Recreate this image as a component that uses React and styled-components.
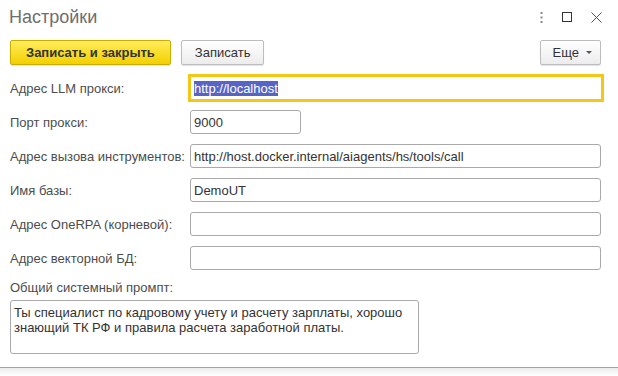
import React from "react";
import styled, { createGlobalStyle } from "styled-components";

const Global = createGlobalStyle`
  html, body { margin: 0; padding: 0; background: #fff; overflow: hidden; }
  body { font-family: "Liberation Sans", Arial, sans-serif; font-size: 13px; color: #4d4d4d; }
`;

const Window = styled.div`
  width: 618px;
  height: 376px;
  display: flex;
  flex-direction: column;
  overflow: hidden;
  background: #fff;
  & > * { flex-shrink: 0; }
`;

const Header = styled.div`
  height: 34px;
  display: flex;
  align-items: center;
  padding: 0 16px 0 9px;
  box-sizing: border-box;
`;

const Title = styled.div`
  flex: 1;
  font-size: 18px;
  color: #6e6e6e;
  padding-top: 1px;
`;

const HeaderIcons = styled.div`
  display: flex;
  align-items: center;
  gap: 19px;
`;

const IconBox = styled.div`
  width: ${(p) => p.$w}px;
  height: 12px;
  display: flex;
  align-items: center;
  justify-content: center;
`;

const Toolbar = styled.div`
  display: flex;
  align-items: center;
  gap: 10px;
  padding: 6px 17px 0 10px;
  height: 24px;
`;

const Button = styled.button`
  height: 25px;
  box-sizing: border-box;
  padding: ${(p) => p.$pad || "0 13px"};
  border-radius: 2px;
  font-family: "Liberation Sans", Arial, sans-serif;
  font-size: 13px;
  color: #333;
  cursor: pointer;
  display: flex;
  align-items: center;
  gap: 7px;
  border: 1px solid ${(p) => (p.$primary ? "#c9ad00" : "#bdbdbd")};
  background: ${(p) =>
    p.$primary
      ? "linear-gradient(#ffec5a, #f3d000)"
      : "linear-gradient(#ffffff, #ececec)"};
  box-shadow: 0 1px 1px rgba(0, 0, 0, 0.12);
  font-weight: ${(p) => (p.$primary ? 700 : 400)};
`;

const Spacer = styled.div`
  flex: 1;
`;

const Form = styled.div`
  display: grid;
  grid-template-columns: 180px 411px;
  row-gap: 10px;
  padding: 12px 0 0 10px;
  align-items: center;
`;

const Label = styled.div`
  color: #4d4d4d;
  font-size: 13px;
  white-space: nowrap;
`;

const Field = styled.div`
  width: ${(p) => p.$width || 411}px;
  height: 24px;
  box-sizing: border-box;
  border: 1px solid #a9a9a9;
  border-radius: 3px;
  padding: 0 3px;
  display: flex;
  align-items: center;
  font-size: 13px;
  color: #333;
  white-space: nowrap;
  overflow: hidden;
  ${(p) =>
    p.$focused &&
    `
    border: 1px solid #f5c518;
    border-radius: 0;
    box-shadow: 0 0 0 2px #f5c518;
    width: ${p.$width ? p.$width : 412}px;
  `}
`;

const Selected = styled.span`
  background: #5664c6;
  color: #fff;
  line-height: 15px;
`;

const PromptBlock = styled.div`
  padding: 10px 0 0 10px;
  display: flex;
  flex-direction: column;
  gap: 5px;
`;

const TextArea = styled.div`
  width: 409px;
  height: 54px;
  box-sizing: border-box;
  border: 1px solid #a9a9a9;
  border-radius: 3px;
  padding: 4px 3px;
  font-size: 13px;
  line-height: 15px;
  color: #333;
`;

const Footer = styled.div`
  margin-top: 13px;
  border-top: 1px solid #a3a3a3;
  height: 8px;
  background: linear-gradient(rgba(0, 0, 0, 0.08), rgba(0, 0, 0, 0));
`;

const Caret = styled.span`
  width: 0;
  height: 0;
  border-left: 3px solid transparent;
  border-right: 3px solid transparent;
  border-top: 3px solid #555;
  margin-top: 1px;
`;

export default function App() {
  const rows = [
    { label: "Адрес LLM прокси:", value: "http://localhost", focused: true },
    { label: "Порт прокси:", value: "9000", width: 111 },
    {
      label: "Адрес вызова инструментов:",
      value: "http://host.docker.internal/aiagents/hs/tools/call",
    },
    { label: "Имя базы:", value: "DemoUT" },
    { label: "Адрес OneRPA (корневой):", value: "" },
    { label: "Адрес векторной БД:", value: "" },
  ];
  return (
    <Window>
      <Global />
      <Header>
        <Title>Настройки</Title>
        <HeaderIcons>
          <IconBox $w={4}>
            <svg width="3" height="11" viewBox="0 0 3 11">
              <rect x="0.5" y="0" width="2" height="2" fill="#888" />
              <rect x="0.5" y="4.5" width="2" height="2" fill="#888" />
              <rect x="0.5" y="9" width="2" height="2" fill="#888" />
            </svg>
          </IconBox>
          <IconBox $w={10}>
            <svg width="10" height="10" viewBox="0 0 10 10">
              <rect x="0.5" y="0.5" width="9" height="9" fill="none" stroke="#333" strokeWidth="1" />
            </svg>
          </IconBox>
          <IconBox $w={11}>
            <svg width="11" height="11" viewBox="0 0 11 11">
              <path d="M0.5 0.5 L10.5 10.5 M10.5 0.5 L0.5 10.5" stroke="#555" strokeWidth="1" />
            </svg>
          </IconBox>
        </HeaderIcons>
      </Header>
      <Toolbar>
        <Button $primary $pad="0 15px">Записать и закрыть</Button>
        <Button>Записать</Button>
        <Spacer />
        <Button $pad="0 8px 0 12px">
          Еще
          <Caret />
        </Button>
      </Toolbar>
      <Form>
        {rows.map((r) => (
          <React.Fragment key={r.label}>
            <Label>{r.label}</Label>
            <Field $focused={r.focused} $width={r.width}>
              {r.focused ? <Selected>{r.value}</Selected> : r.value}
            </Field>
          </React.Fragment>
        ))}
      </Form>
      <PromptBlock>
        <Label>Общий системный промпт:</Label>
        <TextArea>
          Ты специалист по кадровому учету и расчету зарплаты, хорошо знающий ТК РФ и
          правила расчета заработной платы.
        </TextArea>
      </PromptBlock>
      <Footer />
    </Window>
  );
}
